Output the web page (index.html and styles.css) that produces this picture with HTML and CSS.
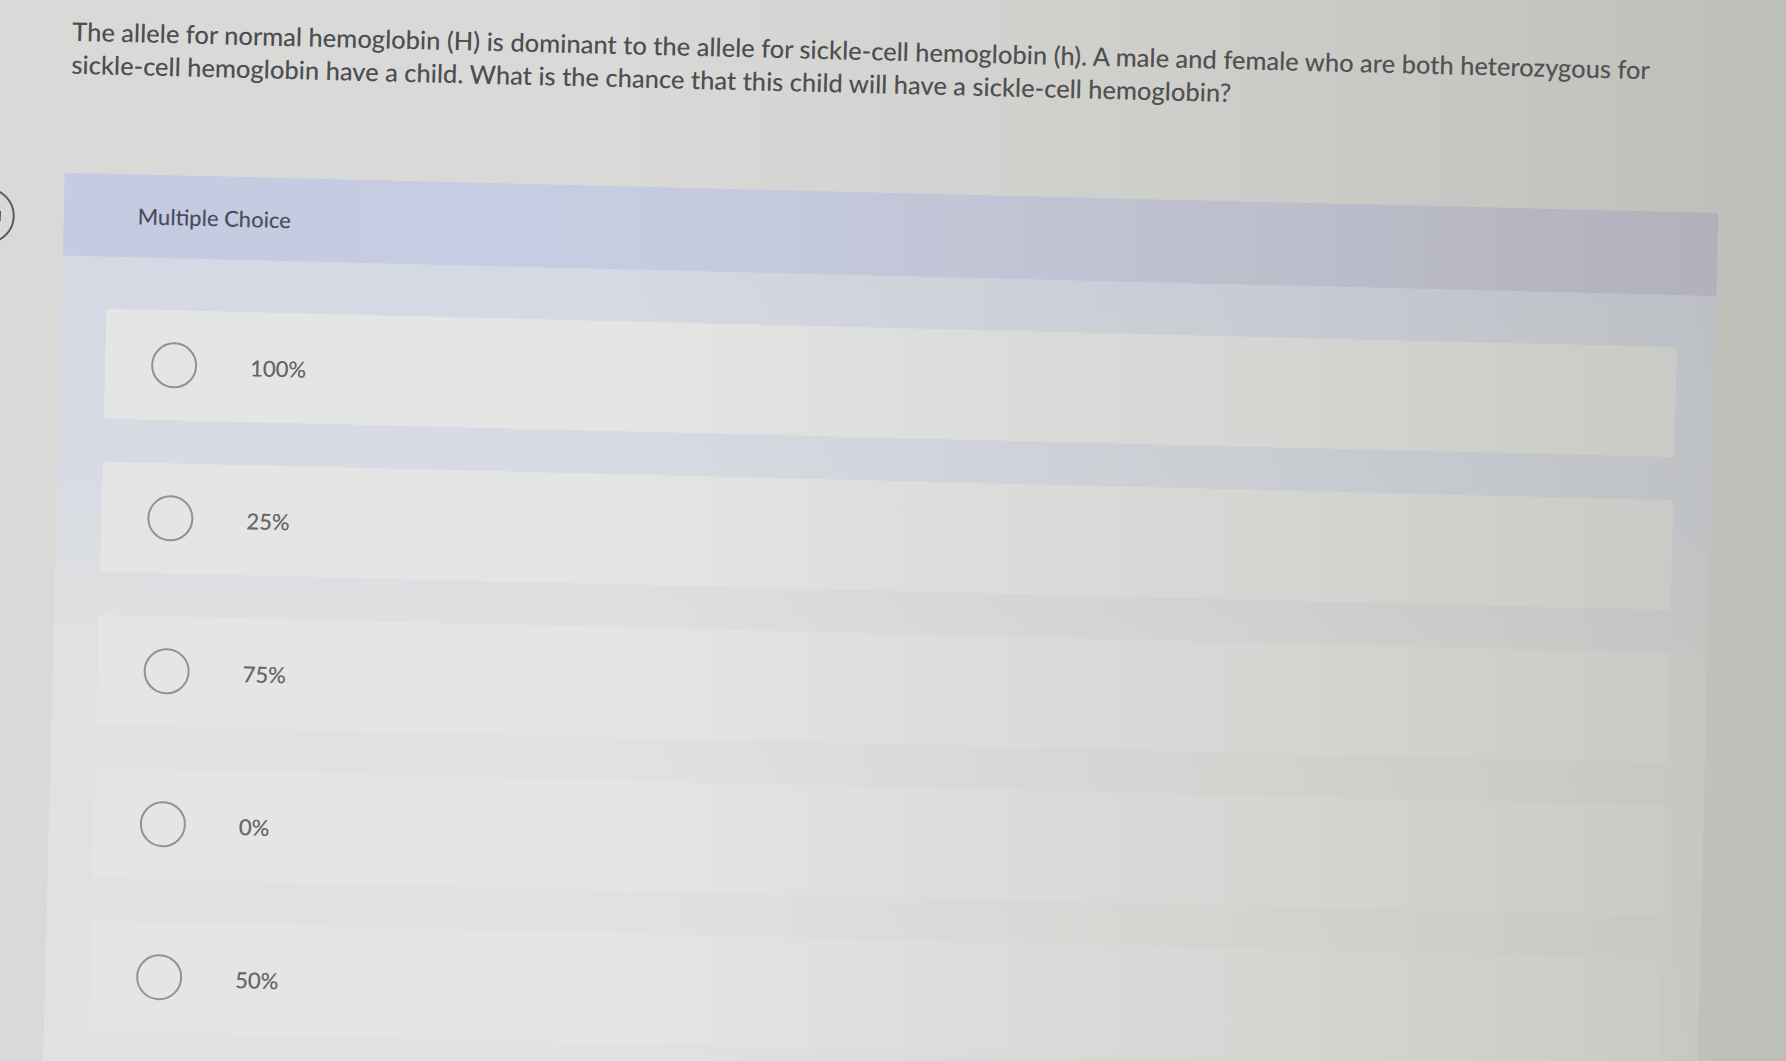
FILE: index.html
```html
<!DOCTYPE html>
<html lang="en">
<head>
<meta charset="utf-8">
<title>Multiple Choice</title>
<link rel="stylesheet" href="styles.css">
</head>
<body>
<div class="page">
  <p class="question">The allele for normal hemoglobin (H) is dominant to the allele for sickle-cell hemoglobin (h). A male and female who are both heterozygous for sickle-cell hemoglobin have a child. What is the chance that this child will have a sickle-cell hemoglobin?</p>
  <section class="panel">
    <div class="badge"><span class="badge-mark"></span></div>
    <div class="panel-header">Multiple Choice</div>
    <div class="options">
      <label class="option"><span class="radio"></span><span class="label">100%</span></label>
      <label class="option"><span class="radio"></span><span class="label">25%</span></label>
      <label class="option"><span class="radio"></span><span class="label">75%</span></label>
      <label class="option"><span class="radio"></span><span class="label">0%</span></label>
      <label class="option"><span class="radio"></span><span class="label">50%</span></label>
    </div>
  </section>
</div>
<div class="shade"></div>
</body>
</html>
```
FILE: styles.css
```css
html, body {
  margin: 0;
  padding: 0;
}
body {
  width: 1786px;
  height: 1061px;
  overflow: hidden;
  position: relative;
  background: #d9dad8;
  font-family: Lato, "Open Sans", "Liberation Sans", sans-serif;
}
.page {
  transform: rotate(1.4deg);
  transform-origin: 0 0;
  padding: 0 63px 0 69px;
  height: 1061px;
  display: flex;
  flex-direction: column;
  overflow: hidden;
}
.question {
  margin: 0 0 92px 4px;
  padding-top: 13px;
  font-size: 25.5px;
  font-weight: 500;
  line-height: 33px;
  color: #4d4d52;
}
.panel {
  position: relative;
  flex: 1;
  background: linear-gradient(180deg, #d3d8e4 0, #d7dbe3 300px, #e0e1e0 470px, #e2e3e1 100%);
}
.badge {
  position: absolute;
  left: -105px;
  top: 17px;
  width: 52px;
  height: 52px;
  border: 2px solid #5a5a5c;
  border-radius: 50%;
  display: flex;
  align-items: center;
  justify-content: flex-end;
}
.badge-mark {
  width: 4px;
  height: 10px;
  background: #3c3c3e;
  margin-right: 12px;
}
.panel-header {
  height: 83px;
  display: flex;
  align-items: center;
  padding-left: 74px;
  background: linear-gradient(90deg, #c4cbe2 0%, #c7cce0 45%, #c8cadc 75%, #c6c6d8 100%);
  font-size: 22px;
  font-weight: 500;
  color: #4a4d5b;
}
.options {
  display: flex;
  flex-direction: column;
  gap: 43px;
  padding: 52px 38px 0 45px;
}
.option {
  height: 110px;
  display: flex;
  align-items: center;
  padding-left: 46px;
  background: #e4e5e4;
  border-radius: 4px;
}
.radio {
  width: 42px;
  height: 42px;
  border: 2px solid #929292;
  border-radius: 50%;
  margin-right: 53px;
  flex: none;
}
.label {
  font-size: 22px;
  color: #67676a;
  text-shadow: 0 0 0.5px rgba(80, 80, 84, 0.6);
}
.shade {
  position: absolute;
  inset: 0;
  pointer-events: none;
  background: linear-gradient(90deg, rgba(0,0,0,0) 0%, rgba(0,0,0,0) 35%, rgba(110,108,90,0.12) 70%, rgba(105,102,88,0.24) 100%);
}
```
